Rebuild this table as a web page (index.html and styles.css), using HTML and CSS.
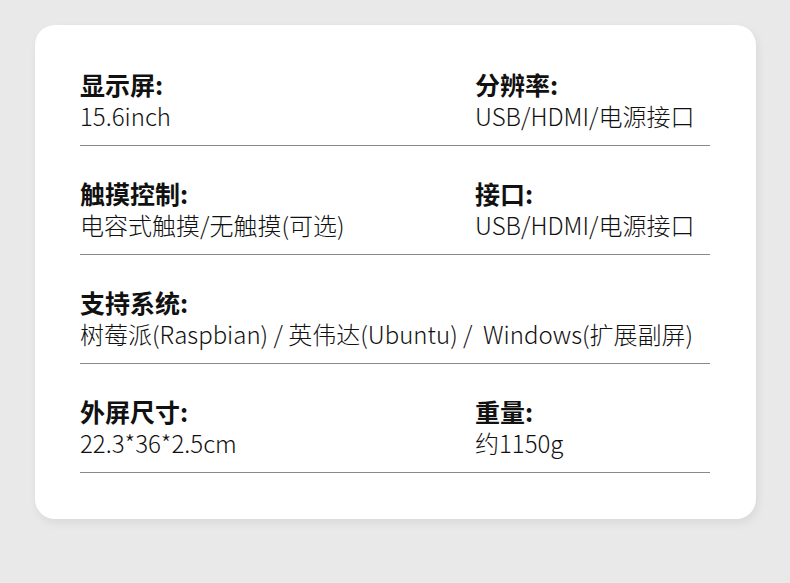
FILE: index.html
```html
<!DOCTYPE html>
<html lang="zh-CN">
<head>
<meta charset="utf-8">
<title>参数</title>
<link rel="stylesheet" href="styles.css">
</head>
<body>
<div class="card">
  <div class="row">
    <div class="cell">
      <div class="label">显示屏:</div>
      <div class="value">15.6inch</div>
    </div>
    <div class="cell">
      <div class="label">分辨率:</div>
      <div class="value">USB/HDMI/电源接口</div>
    </div>
  </div>
  <div class="row">
    <div class="cell">
      <div class="label">触摸控制:</div>
      <div class="value">电容式触摸/无触摸(可选)</div>
    </div>
    <div class="cell">
      <div class="label">接口:</div>
      <div class="value">USB/HDMI/电源接口</div>
    </div>
  </div>
  <div class="row single">
    <div class="cell">
      <div class="label">支持系统:</div>
      <div class="value">树莓派(Raspbian) / 英伟达(Ubuntu) /&nbsp; Windows(扩展副屏)</div>
    </div>
  </div>
  <div class="row">
    <div class="cell">
      <div class="label">外屏尺寸:</div>
      <div class="value">22.3*36*2.5cm</div>
    </div>
    <div class="cell">
      <div class="label">重量:</div>
      <div class="value">约1150g</div>
    </div>
  </div>
</div>
</body>
</html>
```
FILE: styles.css
```css
html, body {
  margin: 0;
  padding: 0;
  background: #e9e9e9;
}
body {
  width: 790px;
  height: 583px;
  overflow: hidden;
  font-family: "Noto Sans CJK SC", "Noto Sans", sans-serif;
}
.card {
  margin: 25px 0 0 35px;
  width: 721px;
  box-sizing: border-box;
  padding: 12px 46px 46px 45px;
  background: #fff;
  border-radius: 20px;
  box-shadow: 2px 4px 10px rgba(0, 0, 0, 0.07);
}
.row {
  display: grid;
  grid-template-columns: 395px 1fr;
  padding: 31px 0 13px;
  border-bottom: 1px solid #8a8a8a;
}
.row.single {
  grid-template-columns: 1fr;
}
.label {
  font-size: 25px;
  line-height: 32px;
  font-weight: 700;
  color: #111;
}
.value {
  font-size: 24px;
  line-height: 32px;
  font-weight: 300;
  color: #111;
  white-space: nowrap;
}
```
